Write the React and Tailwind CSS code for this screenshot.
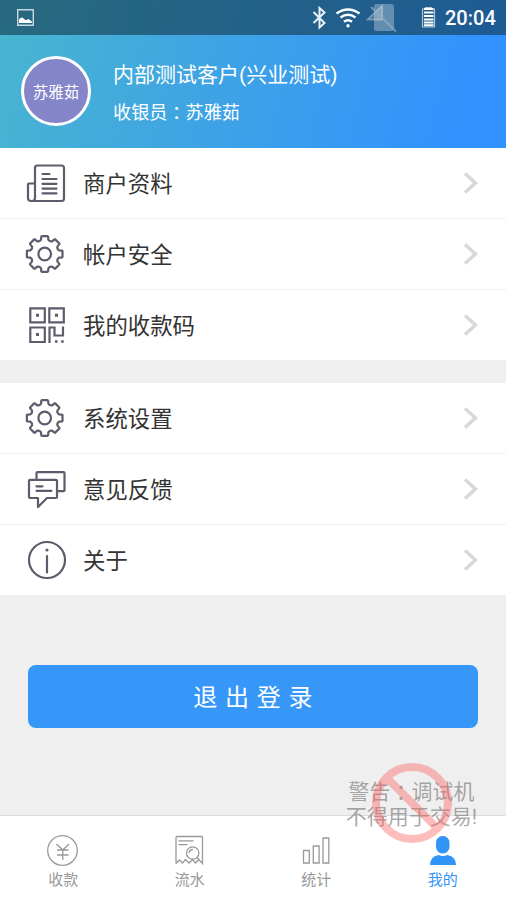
import React from 'react';

const TEETH = 8;

function gearPath(cx, cy) {
  const points = [];
  for (let i = 0; i < TEETH; i += 1) {
    const a = (i * 2 * Math.PI) / TEETH - Math.PI / 2;
    const at = (radial, side) => {
      const x = cx + radial * Math.cos(a) - side * Math.sin(a);
      const y = cy + radial * Math.sin(a) + side * Math.cos(a);
      return `${x.toFixed(2)} ${y.toFixed(2)}`;
    };
    points.push(at(13.2, -4.7), at(14.2, -3.7), at(17.3, -3.4), at(17.8, -2.9));
    points.push(at(17.8, 2.9), at(17.3, 3.4), at(14.2, 3.7), at(13.2, 4.7));
  }
  return `M${points.join('L')}Z`;
}

function MenuSvg({ children }) {
  return (
    <svg
      className="size-11 shrink-0"
      viewBox="0 0 44 44"
      fill="none"
      stroke="#5c5c6c"
      strokeWidth="2.2"
      strokeLinejoin="round"
      strokeLinecap="round"
    >
      {children}
    </svg>
  );
}

function DocIcon() {
  return (
    <MenuSvg>
      <path d="M13 37.500V7q0-2.500 2.500-2.500h24q2.500 0 2.500 2.500v30.500q0 2.500-2.500 2.500H9q-3 0-3-3V23.500q0-1 1-1h6v14.500q0 3-3 3" />
      <path d="M20.500 13h7M20.500 18h14M20.500 22.800h14M20.500 27.600h14M20.500 32.300h14" />
    </MenuSvg>
  );
}

function GearIcon() {
  return (
    <MenuSvg>
      <path d={gearPath(22.7, 22)} />
      <circle cx="22.700" cy="22" r="6.300" />
    </MenuSvg>
  );
}

function QrIcon() {
  return (
    <MenuSvg>
      <g strokeLinejoin="miter" strokeLinecap="butt">
        <path d="M8.300 5.300h14.500v14H8.300zM27.300 5.300h14.500v14H27.300zM8.300 24.500h14.500v14.500H8.300z" />
        <path d="M27.500 40V24.500h5v8h8.500v-9" />
      </g>
      <g fill="#5c5c6c" stroke="none">
        <path d="M14 10.700h3v3h-3zM33 10.700h3v3h-3zM14 30h3v3h-3zM33 37.200h2.500v2.500H33zM39.200 37.200h2.500v2.500h-2.500z" />
      </g>
    </MenuSvg>
  );
}

function ChatIcon() {
  return (
    <MenuSvg>
      <path d="M14.500 12V6.200q0-1 1-1h26q1 0 1 1v17q0 1-1 1H36" />
      <path d="M8 12.800h26q1 0 1 1V30q0 1-1 1H25l-9 9V31H8q-1 0-1-1V13.800q0-1 1-1zM14.500 19.300h6M14.500 23.800h15" />
    </MenuSvg>
  );
}

function InfoIcon() {
  return (
    <MenuSvg>
      <circle cx="25" cy="22" r="18" />
      <path d="M25 18v16.500" />
      <circle cx="25" cy="12" r="1.600" fill="#5c5c6c" stroke="none" />
    </MenuSvg>
  );
}

const menuGroups = [
  [
    { label: '商户资料', Icon: DocIcon },
    { label: '帐户安全', Icon: GearIcon },
    { label: '我的收款码', Icon: QrIcon },
  ],
  [
    { label: '系统设置', Icon: GearIcon },
    { label: '意见反馈', Icon: ChatIcon },
    { label: '关于', Icon: InfoIcon },
  ],
];

const tabs = [
  {
    label: '收款',
    icon: (
      <>
        <circle cx="15.500" cy="16.500" r="14.800" />
        <path d="M9.500 10l6.300 6 6.200-6M10 16h11.500M10 21h11.500M15.800 16v10" />
      </>
    ),
  },
  {
    label: '流水',
    icon: (
      <>
        <path d="M2 29.500V3.500q0-1 1-1h24.500q1 0 1 1v26l-5.500-6M2 29.500l3.500-3.500 3 3 3-3.500 3.500 3.500 3.500-3.500 3 3.500 3-3" />
        <path d="M4.500 6.800h15M4.500 10.700h9" />
        <circle cx="18.700" cy="19" r="6.200" />
        <path d="M15 19q.5-3.500 4-3.500" />
      </>
    ),
  },
  {
    label: '统计',
    icon: <path d="M3.500 16.500h5.800V29H3.500zM13.300 12h5.800v17h-5.800zM23 4h5.800v25H23z" />,
  },
  {
    label: '我的',
    active: true,
    icon: (
      <g fill="#3294f7" stroke="none">
        <rect x="9" y="2" width="13.500" height="17.500" rx="6.500" />
        <path d="M3 31q0-8.500 8.500-10 4.500 2 9 0 8.500 1.500 8.500 10z" />
      </g>
    ),
  },
];

function Colon() {
  return <span className="relative top-px font-['Noto_Sans_CJK_TC',sans-serif]">：</span>;
}

function StatusBar() {
  return (
    <div className="flex h-[35px] items-center bg-[#133749]/60 pl-[17px] pr-[11px] text-white">
      <svg className="size-[17px]" viewBox="0 0 17 17" fill="none">
        <path d="M.7.700h15.600v15.600H.7z" stroke="#c7dadd" strokeWidth="1.400" />
        <path d="M2 14v-3.500l1.500-1.500 2-.5 2 2 2 .5 2-1 2 1.500 1.500 1V14z" fill="#fff" />
      </svg>
      <svg className="ml-auto h-[35px] w-[130px]" viewBox="308 0 130 35" fill="none">
        <path d="M313.500 12l11 11-5 4.500V8l5 4.500-11 10.500" stroke="#e9f1f7" strokeWidth="2" />
        <g stroke="#fff" strokeWidth="2.400">
          <path d="M336.500 13.500q11.500-8 23 0" />
          <path d="M340.500 17.500q7.500-5.500 15 0" />
          <path d="M344 21.800q4-3 8 0" />
        </g>
        <circle cx="348" cy="25.700" r="1.700" fill="#fff" />
        <path d="M376 4h15q3 0 3 3v21q0 3-3 3h-15q-2 0-2-2V6q0-2 2-2z" fill="#fff" fillOpacity=".3" />
        <path d="M365 20.500L383 4v16.500z" fill="#fff" fillOpacity=".2" />
        <path d="M368 19.500L382 6v13.500z" stroke="#fff" strokeOpacity=".25" strokeWidth="1.500" />
        <path d="M371 7l25 24.500" stroke="#8faec6" strokeOpacity=".7" strokeWidth="2" />
        <path d="M422.500 9h3V7.500h6V9h3v18h-12z" stroke="#aac5d9" strokeWidth="1.200" />
        <path d="M424 9h9.500M424 12.500h9.500M424 16h9.500M424 19.500h9.500M424 22.500h9.500M424 25.200h9.500" stroke="#fff" strokeWidth="2" />
      </svg>
      <span className="ml-[7px] w-[50px] whitespace-nowrap font-[Roboto,sans-serif] text-[20px] font-medium leading-none">
        20:04
      </span>
    </div>
  );
}

function MenuRow({ label, Icon, last }) {
  return (
    <li
      className={`flex items-center pl-[22px] pr-[27px] ${
        last ? 'h-[70px]' : 'h-[71px] border-b border-[#f0f0f0]'
      }`}
    >
      <Icon />
      <span className="ml-[17px] pt-[2px] text-[22.400px] leading-none text-[#333333]">{label}</span>
      <svg className="ml-auto h-6 w-4" viewBox="0 0 16 24" fill="none">
        <path d="M2 2.500l10.500 9.500L2 21.500" stroke="#d8d8d8" strokeWidth="3.500" />
      </svg>
    </li>
  );
}

export default function App() {
  return (
    <div className="relative flex h-[900px] w-[506px] flex-col overflow-hidden bg-[#efefef] font-[Roboto,'Noto_Sans_CJK_SC',sans-serif]">
      <header className="h-[148px] shrink-0 bg-[linear-gradient(105deg,#49b5cf_0%,#3fa4e4_42%,#3191ff_92%)]">
        <StatusBar />
        <div className="flex items-center pl-[21px] pt-[21px] text-white">
          <div className="flex size-[70px] items-center justify-center rounded-full border-[3px] border-white bg-[#8585ca] pt-[5px] text-[15.500px] leading-none">
            苏雅茹
          </div>
          <div className="ml-[22px] flex flex-col gap-[16px] pt-[4px]">
            <div className="text-[21px] leading-[21px]">内部测试客户(兴业测试)</div>
            <div className="text-[18.150px] leading-[18px]">
              收银员
              <Colon />
              苏雅茹
            </div>
          </div>
        </div>
      </header>

      <main className="flex flex-1 flex-col">
        {menuGroups.map((group, index) => (
          <ul key={index} className={index > 0 ? 'mt-[23px] bg-white' : 'bg-white'}>
            {group.map((item, i) => (
              <MenuRow key={item.label} {...item} last={i === group.length - 1} />
            ))}
          </ul>
        ))}
        <button className="mx-7 mt-[70px] h-[63px] rounded-lg bg-[#3697f9] pt-[3px] text-[24px] leading-none text-white [word-spacing:1.800px]">
          退 出 登 录
        </button>
      </main>

      <nav className="flex h-[85px] shrink-0 border-t border-[#dddddd] bg-white">
        {tabs.map((tab) => (
          <div
            key={tab.label}
            className={`flex flex-1 flex-col items-center pt-[18px] text-[15px] leading-none ${
              tab.active ? 'text-[#3294f7]' : 'text-[#999999]'
            }`}
          >
            <svg className="size-8" viewBox="0 0 32 32" fill="none" stroke="#999999" strokeWidth="1.300">
              {tab.icon}
            </svg>
            <span className="mt-[7px]">{tab.label}</span>
          </div>
        ))}
      </nav>

      {/* debug device watermark, floats over page and tab bar */}
      <div className="pointer-events-none absolute left-[341px] top-[762px] flex h-[82px] w-[141px] items-center justify-center">
        <div className="whitespace-nowrap pt-[2px] text-center text-[21px] leading-[25px] text-[#777777]/65">
          警告
          <Colon />
          调试机
          <br />
          不得用于交易!
        </div>
        <svg className="absolute size-[82px]" viewBox="0 0 82 82" fill="none" stroke="#fb6262" strokeOpacity=".42" strokeWidth="8">
          <path d="M41 5a36 36 0 1 1 0 72 36 36 0 0 1 0-72zM16 16l50 50" />
        </svg>
      </div>
    </div>
  );
}
